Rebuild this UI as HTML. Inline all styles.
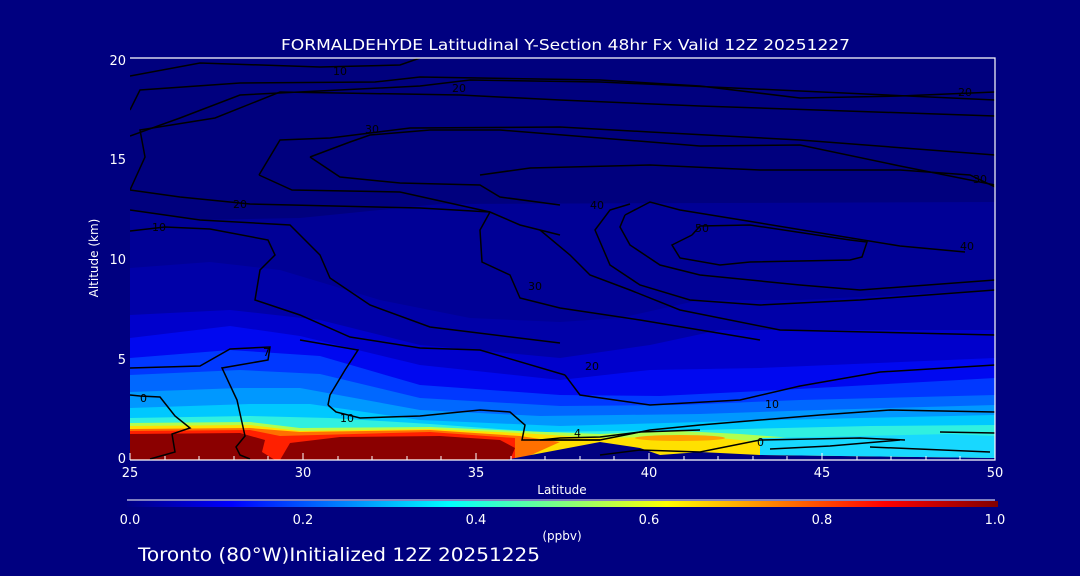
<!DOCTYPE html>
<html><head><meta charset="utf-8"><style>
html,body{margin:0;padding:0;background:#000080;width:1080px;height:576px;overflow:hidden}
svg{display:block}
.w{font-family:"DejaVu Sans","Liberation Sans",sans-serif;fill:#fff}
.k{font-family:"DejaVu Sans","Liberation Sans",sans-serif;fill:#000}
</style></head><body>
<svg width="1080" height="576" viewBox="0 0 1080 576" xmlns="http://www.w3.org/2000/svg">
<defs>
<linearGradient id="cb" x1="0" x2="1" y1="0" y2="0">
<stop offset="0" stop-color="#000083"/>
<stop offset="0.12" stop-color="#0000ff"/>
<stop offset="0.37" stop-color="#00ffff"/>
<stop offset="0.5" stop-color="#80ff80"/>
<stop offset="0.62" stop-color="#ffff00"/>
<stop offset="0.87" stop-color="#ff0000"/>
<stop offset="1" stop-color="#800000"/>
</linearGradient>
<clipPath id="pc"><rect x="130" y="58" width="865" height="402"/></clipPath>
</defs>
<rect width="1080" height="576" fill="#000080"/>
<text class="w" x="281" y="50" font-size="15" textLength="569" lengthAdjust="spacingAndGlyphs">FORMALDEHYDE Latitudinal Y-Section 48hr  Fx Valid 12Z 20251227</text>
<g clip-path="url(#pc)">
<rect x="130" y="58" width="865" height="402" fill="#00007e"/>
<polygon points="130,210 200,220 300,218 440,204 995,202 995,460 130,460" fill="#000096"/>
<polygon points="130,268 210,262 280,270 380,300 470,318 560,322 620,318 700,300 800,300 995,290 995,460 130,460" fill="#0000a8"/>
<polygon points="130,315 230,310 320,320 420,345 560,358 650,345 720,330 995,330 995,460 130,460" fill="#0000cc"/>
<polygon points="130,338 230,326 300,336 420,365 560,380 650,370 760,368 995,358 995,460 130,460" fill="#0008f0"/>
<polygon points="130,358 230,350 320,356 420,385 560,395 660,396 780,390 995,378 995,460 130,460" fill="#0038ff"/>
<polygon points="130,375 240,370 320,374 420,398 560,406 680,405 800,400 995,395 995,460 130,460" fill="#0068ff"/>
<polygon points="130,392 240,388 300,388 420,410 540,416 700,414 820,410 995,405 995,460 130,460" fill="#0098ff"/>
<polygon points="130,408 250,404 310,404 420,420 560,426 700,422 860,418 995,415 995,460 130,460" fill="#00c8ff"/>
<polygon points="130,418 250,416 330,418 430,424 540,432 700,430 870,426 995,425 995,460 130,460" fill="#30f0e0"/>
<polygon points="130,423 250,422 300,428 430,427 520,431 600,434 680,431 740,434 820,440 900,446 995,450 995,460 130,460" fill="#b0ff50"/>
<polygon points="130,426 250,425 300,431 430,429 520,433 600,438 700,436 760,442 820,452 995,458 995,460 130,460" fill="#ffe000"/>
<polygon points="130,429 250,428 300,432 430,430 520,436 560,442 520,460 130,460" fill="#ff7000"/>
<ellipse cx="680" cy="438" rx="45" ry="3" fill="#ffa000"/>
<polygon points="130,431 250,430 280,436 430,432 515,438 515,460 130,460" fill="#ff2000"/>
<polygon points="130,434 240,433 265,440 262,452 275,460 130,460" fill="#8b0000"/>
<polygon points="290,443 340,437 440,436 500,440 515,448 510,460 280,460" fill="#8b0000"/>
<polygon points="505,460 600,442 640,448 660,455 700,452 760,455 995,458 995,460" fill="#000080"/>
<polygon points="760,438 860,436 950,434 995,436 995,458 760,455" fill="#18d8ff"/>
</g>
<g fill="none" stroke="#000" stroke-width="1.5" clip-path="url(#pc)">
<polyline points="130,76 200,63 320,67 400,65 420,58"/>
<polyline points="130,110 140,90 240,83 375,82 420,77 600,80 700,86 800,98 900,96 995,92"/>
<polyline points="130,136 180,118 240,95 420,86 470,80 600,82 690,86 995,100"/>
<polyline points="130,190 145,157 140,130 215,118 280,92 460,95 560,100 700,106 995,116"/>
<polyline points="130,190 180,197 250,204 420,208 490,212"/>
<polyline points="259,175 280,140 330,138 410,128 560,127 650,132 800,140 930,150 995,155"/>
<polyline points="259,175 292,190 400,192 490,212 520,225 560,235"/>
<polyline points="310,157 350,142 370,135 430,130 500,130 700,146 800,145 900,166 995,185"/>
<polyline points="310,157 340,177 400,183 480,185 500,197 560,205"/>
<polyline points="480,175 530,168 650,165 760,170 900,170 970,175 995,187"/>
<polyline points="130,231 165,227 210,229 268,240 275,255 260,270 255,300 300,315 350,337 420,348 480,350 565,375"/>
<polyline points="130,210 200,220 290,225 320,255 330,278 370,305 430,327 560,343"/>
<polyline points="490,212 480,230 482,262 510,275 520,298 560,308 640,320 760,340"/>
<polyline points="540,230 570,255 590,275 630,290 680,310 780,330 995,335"/>
<polyline points="630,204 610,210 595,230 610,265 640,285 690,300 760,305 860,300 995,290"/>
<polyline points="625,215 650,202 680,210 760,223 900,246 965,252"/>
<polyline points="625,215 620,227 630,245 660,265 700,275 800,285 860,290 995,280"/>
<polyline points="692,235 700,226 750,225 850,240 867,242 862,257 850,260 750,262 720,265 680,258 672,245 692,235"/>
<polyline points="130,395 140,396 160,397 175,416 190,428 172,434 175,452 150,459"/>
<polyline points="130,368 200,366 230,349 270,347 268,360 222,368 237,400 245,436 236,447 240,455 250,459"/>
<polyline points="328,405 336,412 360,418 420,416 480,410 510,412 525,425 522,440 600,440 650,430 700,425 760,420 820,415 890,410 995,412"/>
<polyline points="328,405 330,395 345,370 358,350 300,340"/>
<polyline points="565,375 580,395 650,405 740,400 800,386 880,372 995,365"/>
<polyline points="700,430 640,432 600,437 560,438 540,440 600,440"/>
<polyline points="600,455 640,450 700,452 760,440 860,438 905,440"/>
<polyline points="770,449 830,446 900,440"/>
<polyline points="940,432 995,433"/>
<polyline points="870,447 990,452"/>
</g>
<g font-size="11">
<text class="k" x="333" y="75">10</text>
<text class="k" x="452" y="92">20</text>
<text class="k" x="365" y="133">30</text>
<text class="k" x="233" y="208">20</text>
<text class="k" x="152" y="231">10</text>
<text class="k" x="958" y="96">20</text>
<text class="k" x="973" y="183">30</text>
<text class="k" x="590" y="209">40</text>
<text class="k" x="695" y="232">50</text>
<text class="k" x="960" y="250">40</text>
<text class="k" x="528" y="290">30</text>
<text class="k" x="585" y="370">20</text>
<text class="k" x="263" y="356">7</text>
<text class="k" x="140" y="402">0</text>
<text class="k" x="340" y="422">10</text>
<text class="k" x="765" y="408">10</text>
<text class="k" x="574" y="437">4</text>
<text class="k" x="757" y="446">0</text>
</g>
<g stroke="#fff" stroke-width="1.2" fill="none">
<polyline points="130,58 995,58 995,460 130,460"/>
</g>
<g stroke="#fff" stroke-width="1">
<line x1="130" y1="460" x2="130" y2="453"/><line x1="165" y1="460" x2="165" y2="456"/><line x1="199" y1="460" x2="199" y2="456"/><line x1="234" y1="460" x2="234" y2="456"/><line x1="268" y1="460" x2="268" y2="456"/>
<line x1="303" y1="460" x2="303" y2="453"/><line x1="338" y1="460" x2="338" y2="456"/><line x1="372" y1="460" x2="372" y2="456"/><line x1="407" y1="460" x2="407" y2="456"/><line x1="441" y1="460" x2="441" y2="456"/>
<line x1="476" y1="460" x2="476" y2="453"/><line x1="511" y1="460" x2="511" y2="456"/><line x1="545" y1="460" x2="545" y2="456"/><line x1="580" y1="460" x2="580" y2="456"/><line x1="614" y1="460" x2="614" y2="456"/>
<line x1="649" y1="460" x2="649" y2="453"/><line x1="684" y1="460" x2="684" y2="456"/><line x1="718" y1="460" x2="718" y2="456"/><line x1="753" y1="460" x2="753" y2="456"/><line x1="787" y1="460" x2="787" y2="456"/>
<line x1="822" y1="460" x2="822" y2="453"/><line x1="857" y1="460" x2="857" y2="456"/><line x1="891" y1="460" x2="891" y2="456"/><line x1="926" y1="460" x2="926" y2="456"/><line x1="960" y1="460" x2="960" y2="456"/>
</g>
<g font-size="13">
<text class="w" x="126" y="65" text-anchor="end">20</text>
<text class="w" x="126" y="164" text-anchor="end">15</text>
<text class="w" x="126" y="264" text-anchor="end">10</text>
<text class="w" x="126" y="364" text-anchor="end">5</text>
<text class="w" x="126" y="463" text-anchor="end">0</text>
<text class="w" x="130" y="477" text-anchor="middle">25</text>
<text class="w" x="303" y="477" text-anchor="middle">30</text>
<text class="w" x="476" y="477" text-anchor="middle">35</text>
<text class="w" x="649" y="477" text-anchor="middle">40</text>
<text class="w" x="822" y="477" text-anchor="middle">45</text>
<text class="w" x="995" y="477" text-anchor="middle">50</text>
<text class="w" x="562" y="494" font-size="12" text-anchor="middle">Latitude</text>
<text class="w" transform="translate(98,258) rotate(-90)" font-size="12" text-anchor="middle">Altitude (km)</text>
</g>
<line x1="127" y1="500" x2="995" y2="500" stroke="#fff" stroke-width="1"/>
<rect x="127" y="501" width="871" height="6" fill="url(#cb)"/>
<g font-size="13">
<text class="w" x="130" y="524" text-anchor="middle">0.0</text>
<text class="w" x="303" y="524" text-anchor="middle">0.2</text>
<text class="w" x="476" y="524" text-anchor="middle">0.4</text>
<text class="w" x="649" y="524" text-anchor="middle">0.6</text>
<text class="w" x="822" y="524" text-anchor="middle">0.8</text>
<text class="w" x="995" y="524" text-anchor="middle">1.0</text>
<text class="w" x="562" y="540" font-size="12" text-anchor="middle">(ppbv)</text>
</g>
<text class="w" x="138" y="561" font-size="19" textLength="402" lengthAdjust="spacingAndGlyphs">Toronto (80°W)Initialized 12Z 20251225</text>
</svg>
</body></html>
